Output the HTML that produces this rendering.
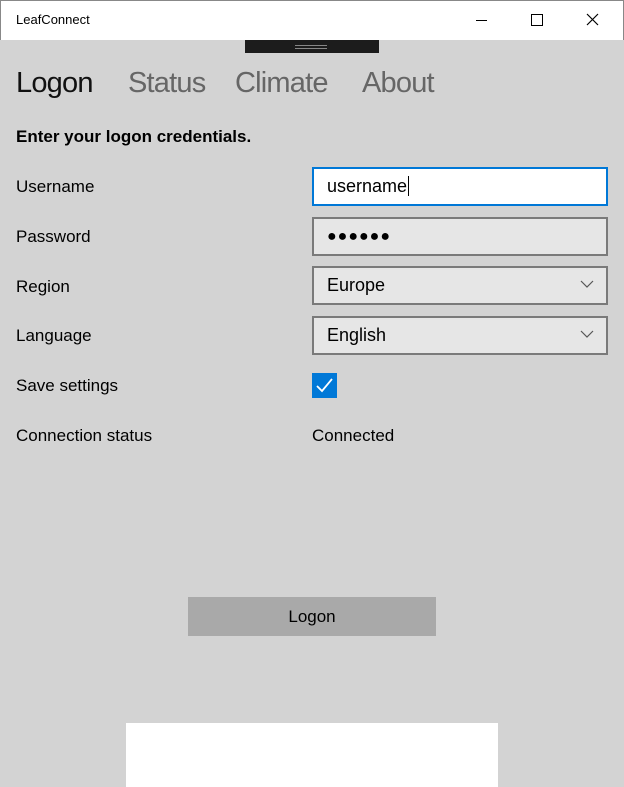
<!DOCTYPE html>
<html><head><style>
body{margin:0;width:624px;height:787px;position:relative;overflow:hidden;background:#d3d3d3;font-family:"Liberation Sans",sans-serif;color:#000}
.a{position:absolute}
.title{left:0;top:0;width:622px;height:39px;background:#fff;border:1px solid #888;border-bottom:none}
.f{position:absolute;left:312px;width:292px;height:35px;border:2px solid #7a7a7a;background:#e6e6e6;box-sizing:content-box;font-size:18px;line-height:35px;padding-left:0}
.f span{position:absolute;left:13px;top:0}
.lbl{position:absolute;left:16px;font-size:17px}
.chev{position:absolute;right:12px;top:12px}
.tab{position:absolute;top:67px;font-size:29px;letter-spacing:-0.8px;color:#666}
</style></head><body>
<div class="a title"></div>
<div class="a" style="left:16px;top:12px;font-size:13px">LeafConnect</div>
<div class="a" style="left:476px;top:20px;width:11px;height:1px;background:#000"></div>
<div class="a" style="left:531px;top:14px;width:10px;height:10px;border:1px solid #000"></div>
<svg class="a" style="left:586px;top:13px" width="13" height="13"><path d="M1 1L12 12M12 1L1 12" stroke="#000" stroke-width="1.2"/></svg>
<div class="a" style="left:245px;top:40px;width:134px;height:13px;background:#1c1c1c"></div>
<div class="a" style="left:295px;top:45px;width:32px;height:1px;background:#888"></div>
<div class="a" style="left:295px;top:48px;width:32px;height:1px;background:#888"></div>
<div class="tab" style="left:16px;color:#111">Logon</div>
<div class="tab" style="left:128px">Status</div>
<div class="tab" style="left:235px">Climate</div>
<div class="tab" style="left:362px">About</div>
<div class="a" style="left:16px;top:127px;font-size:17px;font-weight:bold">Enter your logon credentials.</div>
<div class="lbl" style="top:177px">Username</div>
<div class="lbl" style="top:227px">Password</div>
<div class="lbl" style="top:277px">Region</div>
<div class="lbl" style="top:326px">Language</div>
<div class="lbl" style="top:376px">Save settings</div>
<div class="lbl" style="top:426px">Connection status</div>
<div class="a" style="left:312px;top:426px;font-size:17px">Connected</div>
<div class="f" style="top:167px;background:#fff;border-color:#0078d7"><span>username<span style="position:static;border-left:1px solid #000;margin-left:1px"></span></span></div>
<div class="f" style="top:217px"><span style="font-size:16px;letter-spacing:1px">●●●●●●</span></div>
<div class="f" style="top:266px"><span>Europe</span><svg class="chev" width="14" height="9"><path d="M1 1L7 7L13 1" stroke="#555" fill="none" stroke-width="1.2"/></svg></div>
<div class="f" style="top:316px"><span>English</span><svg class="chev" width="14" height="9"><path d="M1 1L7 7L13 1" stroke="#555" fill="none" stroke-width="1.2"/></svg></div>
<div class="a" style="left:312px;top:373px;width:25px;height:25px;background:#0078d7"></div>
<svg class="a" style="left:312px;top:373px" width="25" height="25"><path d="M5 13L10 18L20 6" stroke="#fff" fill="none" stroke-width="1.8"/></svg>
<div class="a" style="left:188px;top:597px;width:248px;height:39px;background:#a9a9a9;text-align:center;line-height:39px;font-size:17px">Logon</div>
<div class="a" style="left:126px;top:723px;width:372px;height:64px;background:#fff"></div>
</body></html>
